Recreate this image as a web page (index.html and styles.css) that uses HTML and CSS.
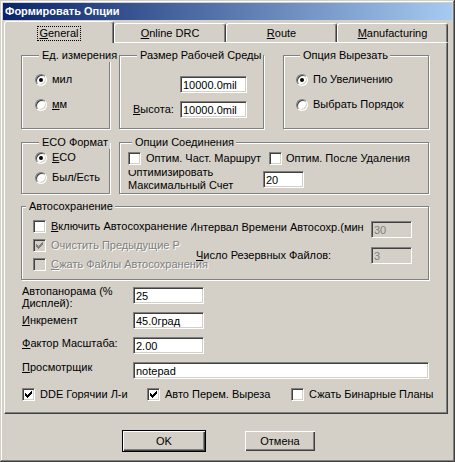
FILE: index.html
```html
<!DOCTYPE html>
<html lang="ru">
<head>
<meta charset="utf-8">
<title>Формировать Опции</title>
<link rel="stylesheet" href="styles.css">
</head>
<body>
<div class="window">
  <div class="titlebar">Формировать Опции</div>
  <div class="tabs">
    <div class="tab active"><span class="focus"><u>G</u>eneral</span></div>
    <div class="tab t2"><u>O</u>nline DRC</div>
    <div class="tab"><u>R</u>oute</div>
    <div class="tab"><u>M</u>anufacturing</div>
  </div>
  <div class="panel">
    <div class="row">
      <div class="group g1">
        <div class="legend">Ед. измерения</div>
        <div class="opt first"><span class="radio on"></span><span>мил</span></div>
        <div class="opt next"><span class="radio"></span><span><u>м</u>м</span></div>
      </div>
      <div class="group g2">
        <div class="legend">Размер Рабочей Среды</div>
        <div class="size">
          <span></span><input class="edit" value="10000.0mil">
          <span><u>В</u>ысота:</span><input class="edit" value="10000.0mil">
        </div>
      </div>
      <div class="group g3">
        <div class="legend">Опция Вырезать</div>
        <div class="opt first"><span class="radio on"></span><span>По Увеличению</span></div>
        <div class="opt next"><span class="radio"></span><span>Выбрать Порядок</span></div>
      </div>
    </div>
    <div class="row row2">
      <div class="group g4">
        <div class="legend">ECO Формат</div>
        <div class="opt eco1"><span class="radio on"></span><span><u>E</u>CO</span></div>
        <div class="opt eco2"><span class="radio"></span><span>Был/Есть</span></div>
      </div>
      <div class="group g5">
        <div class="legend">Опции Соединения</div>
        <div class="cbrow">
          <div class="cbitem w141"><span class="check"></span><span>Оптим. Част. Маршрут</span></div>
          <div class="cbitem tight"><span class="check"></span><span>Оптим. После Удаления</span></div>
        </div>
        <div class="maxrow">
          <div class="cliplabel"><div class="cliptext">Оптимизировать<br>Максимальный Счет</div></div>
          <input class="edit w41" value="20">
        </div>
      </div>
    </div>
    <div class="row row3">
      <div class="group g6">
        <div class="legend">Автосохранение</div>
        <div class="as-body">
          <div class="as-left">
            <div class="cbitem"><span class="check"></span><span><u>В</u>ключить Автосохранение</span></div>
            <div class="cbitem dis"><span class="check off"><svg width="7" height="7" viewBox="0 0 7 7" shape-rendering="crispEdges"><path fill="#808080" d="M6 0h1v1h-1zM5 1h2v1h-2zM0 2h1v1h-1zM4 2h3v1h-3zM0 3h2v1h-2zM3 3h3v1h-3zM0 4h5v1h-5zM1 5h3v1h-3zM2 6h1v1h-1z"/></svg></span><span class="gray">Очистить Предыдущие Р</span></div>
            <div class="cbitem dis"><span class="check off"></span><span class="gray"><u>С</u>жать Файлы Автосохранения</span></div>
          </div>
          <div class="as-right">
            <div class="asrow"><div class="aslabel"><span class="shift">Интервал Времени Автосохр.(мин</span></div><input class="edit w41 disabled" value="30" disabled></div>
            <div class="asrow r2"><div class="aslabel pad"><u>Ч</u>исло Резервных Файлов:</div><input class="edit w41 disabled" value="3" disabled></div>
          </div>
        </div>
      </div>
    </div>
    <div class="form">
      <div class="frow"><div class="flabel two">Автопанорама (%<br>Дисплей):</div><input class="edit w71" value="25"></div>
      <div class="frow"><div class="flabel lb"><u>И</u>нкремент</div><input class="edit w71" value="45.0град"></div>
      <div class="frow"><div class="flabel lc"><u>Ф</u>актор Масштаба:</div><input class="edit w71" value="2.00"></div>
      <div class="frow"><div class="flabel ld"><u>П</u>росмотрщик</div><input class="edit w296" value="notepad"></div>
    </div>
    <div class="bottomchecks">
      <div class="cbitem b1"><span class="check"><svg width="7" height="7" viewBox="0 0 7 7" shape-rendering="crispEdges"><path fill="#000" d="M6 0h1v1h-1zM5 1h2v1h-2zM0 2h1v1h-1zM4 2h3v1h-3zM0 3h2v1h-2zM3 3h3v1h-3zM0 4h5v1h-5zM1 5h3v1h-3zM2 6h1v1h-1z"/></svg></span><span>DDE Горячии Л-и</span></div>
      <div class="cbitem b2"><span class="check"><svg width="7" height="7" viewBox="0 0 7 7" shape-rendering="crispEdges"><path fill="#000" d="M6 0h1v1h-1zM5 1h2v1h-2zM0 2h1v1h-1zM4 2h3v1h-3zM0 3h2v1h-2zM3 3h3v1h-3zM0 4h5v1h-5zM1 5h3v1h-3zM2 6h1v1h-1z"/></svg></span><span>Авто Перем. Выреза</span></div>
      <div class="cbitem"><span class="check"></span><span>Сжать Бинарные Планы</span></div>
    </div>
  </div>
  <div class="buttons">
    <div class="btn default">OK</div>
    <div class="btn cancel">Отмена</div>
  </div>
</div>
</body>
</html>
```

FILE: styles.css
```css
* { box-sizing: border-box; }
html, body { margin: 0; padding: 0; background: #d4d0c8; }
body {
  font-family: "Liberation Sans", Arial, sans-serif;
  font-size: 11px;
  line-height: 13px;
  color: #000;
}
u { text-decoration: underline; text-underline-offset: 1px; }

.window {
  width: 455px;
  height: 462px;
  padding: 3px;
  background: #d4d0c8;
  box-shadow: inset -1px -1px #404040, inset 1px 1px #d4d0c8, inset -2px -2px #808080, inset 2px 2px #fff;
  display: flex;
  flex-direction: column;
}

.titlebar {
  height: 17px;
  flex: none;
  background: linear-gradient(to right, #0a246a, #a6caf0);
  color: #fff;
  font-weight: bold;
  padding-left: 2px;
  display: flex;
  align-items: center;
}

.tabs {
  display: flex;
  align-items: flex-start;
  height: 21px;
  flex: none;
  margin: 1px 4px 0 1px;
  position: relative;
  z-index: 1;
}
.tab {
  width: 111px;
  height: 19px;
  margin-top: 2px;
  border: 1px solid;
  border-color: #fff #404040 transparent #fff;
  border-bottom: 0;
  border-radius: 3px 3px 0 0;
  box-shadow: inset -1px 0 #808080;
  background: #d4d0c8;
  text-align: center;
  padding-top: 3px;
}
.tab.t2 { width: 112px; }
.tab.active {
  width: 110px;
  height: 22px;
  margin-top: 0;
  padding-top: 4px;
}
.focus {
  display: inline-block;
  border: 1px dotted #000;
  padding: 0 1px;
  line-height: 13px;
}

.panel {
  height: 372px;
  flex: none;
  margin: 0 4px 0 1px;
  border: 1px solid;
  border-color: #fff #404040 #404040 #fff;
  box-shadow: inset -1px -1px #808080;
  padding: 12px 0 0 16px;
}

.row { display: flex; align-items: flex-start; }
.row2 { margin-top: 13px; }
.row3 { margin-top: 12px; }

.group {
  border: 1px solid #808080;
  box-shadow: inset 1px 1px #fff, 1px 1px #fff;
  flex: none;
}
.legend {
  width: max-content;
  height: 13px;
  margin: -7px 0 0 4px;
  padding: 0 2px 0 3px;
  background: #d4d0c8;
}
.g1 { width: 89px; height: 74px; padding-left: 13px; }
.g2 { width: 145px; height: 74px; padding-left: 13px; margin-left: 9px; }
.g3 { width: 146px; height: 74px; padding-left: 12px; margin-left: 19px; }
.g4 { width: 89px; height: 52px; padding-left: 13px; }
.g5 { width: 310px; height: 52px; padding-left: 8px; margin-left: 9px; }
.g6 { width: 408px; height: 74px; }

.opt { display: flex; align-items: center; gap: 5px; height: 13px; }
.opt.first { margin-top: 11px; }
.opt.next { margin-top: 12px; }
.opt.eco1 { margin-top: 2px; }
.opt.eco2 { margin-top: 7px; }

.radio {
  width: 12px;
  height: 12px;
  flex: none;
  border-radius: 50%;
  background: #fff;
  border: 1px solid;
  border-color: #808080 #fff #fff #808080;
  box-shadow: inset 1px 1px #404040, inset -1px -1px #d4d0c8;
  position: relative;
}
.radio.on::after {
  content: "";
  position: absolute;
  left: 3px;
  top: 3px;
  width: 4px;
  height: 4px;
  border-radius: 50%;
  background: #000;
}

.check {
  width: 13px;
  height: 13px;
  flex: none;
  background: #fff;
  border: 1px solid;
  border-color: #808080 #fff #fff #808080;
  box-shadow: inset 1px 1px #404040, inset -1px -1px #d4d0c8;
  display: flex;
  align-items: center;
  justify-content: center;
}
.check.off { background: #d4d0c8; }
.check svg { display: block; }

.cbitem { display: flex; align-items: center; gap: 5px; height: 13px; white-space: nowrap; flex: none; }
.cbitem.tight { gap: 4px; }
.w141 { width: 141px; }
.gray { color: #808080; text-shadow: 1px 1px #fff; }

.edit {
  height: 17px;
  margin: 0;
  background: #fff;
  border: 1px solid;
  border-color: #808080 #fff #fff #808080;
  box-shadow: inset 1px 1px #404040, inset -1px -1px #d4d0c8;
  padding: 0 0 0 2px;
  font-family: "Liberation Sans", Arial, sans-serif;
  font-size: 11px;
  color: #000;
  outline: none;
  flex: none;
}
.edit.disabled { background: #d4d0c8; color: #808080; -webkit-text-fill-color: #808080; opacity: 1; }
.w41 { width: 41px; }
.w71 { width: 71px; }
.w296 { width: 296px; }

.size {
  display: grid;
  grid-template-columns: 47px 67px;
  row-gap: 8px;
  margin-top: 14px;
  align-items: center;
}
.size .edit { width: 67px; }

.cbrow { display: flex; align-items: center; height: 13px; margin-top: 3px; }
.maxrow { display: flex; align-items: flex-start; margin-top: 5px; }
.cliplabel { width: 135px; height: 22px; overflow: hidden; }
.cliptext { margin-top: -4px; line-height: 13px; white-space: nowrap; }
.maxrow .edit { margin-top: 1px; }

.as-body { display: flex; margin-top: 7px; }
.as-left { width: 169px; padding-left: 11px; display: flex; flex-direction: column; gap: 6px; position: relative; z-index: 1; }
.as-right { padding-top: 1px; }
.asrow { display: flex; align-items: flex-start; }
.asrow.r2 { margin-top: 9px; }
.aslabel { width: 180px; overflow: hidden; white-space: nowrap; }
.asrow.r2 .aslabel { margin-top: 2px; }
.aslabel.pad { padding-left: 5px; }
.shift { display: inline-block; margin-left: -2px; }

.form { margin-top: 5px; }
.frow { display: flex; align-items: flex-start; height: 25px; }
.frow .edit { margin-top: 2px; }
.flabel { width: 112px; flex: none; white-space: nowrap; }
.flabel.two { line-height: 12px; padding-left: 1px; }
.flabel.lb { margin-top: 4px; padding-left: 1px; }
.flabel.lc { margin-top: 2px; padding-left: 1px; }
.flabel.ld { margin-top: 1px; padding-left: 1px; }

.bottomchecks { display: flex; margin-top: 3px; padding-left: 1px; }
.b1 { width: 125px; }
.b2 { width: 144px; }

.buttons { display: flex; align-items: flex-start; margin-top: 16px; padding-left: 119px; }
.btn {
  display: flex;
  align-items: center;
  justify-content: center;
  background: #d4d0c8;
  box-shadow: inset 1px 1px #fff, inset -1px -1px #404040, inset -2px -2px #808080;
  flex: none;
}
.btn.default { width: 84px; height: 22px; border: 1px solid #000; }
.btn.cancel { width: 70px; height: 20px; margin-left: 39px; margin-top: 1px; }
```
